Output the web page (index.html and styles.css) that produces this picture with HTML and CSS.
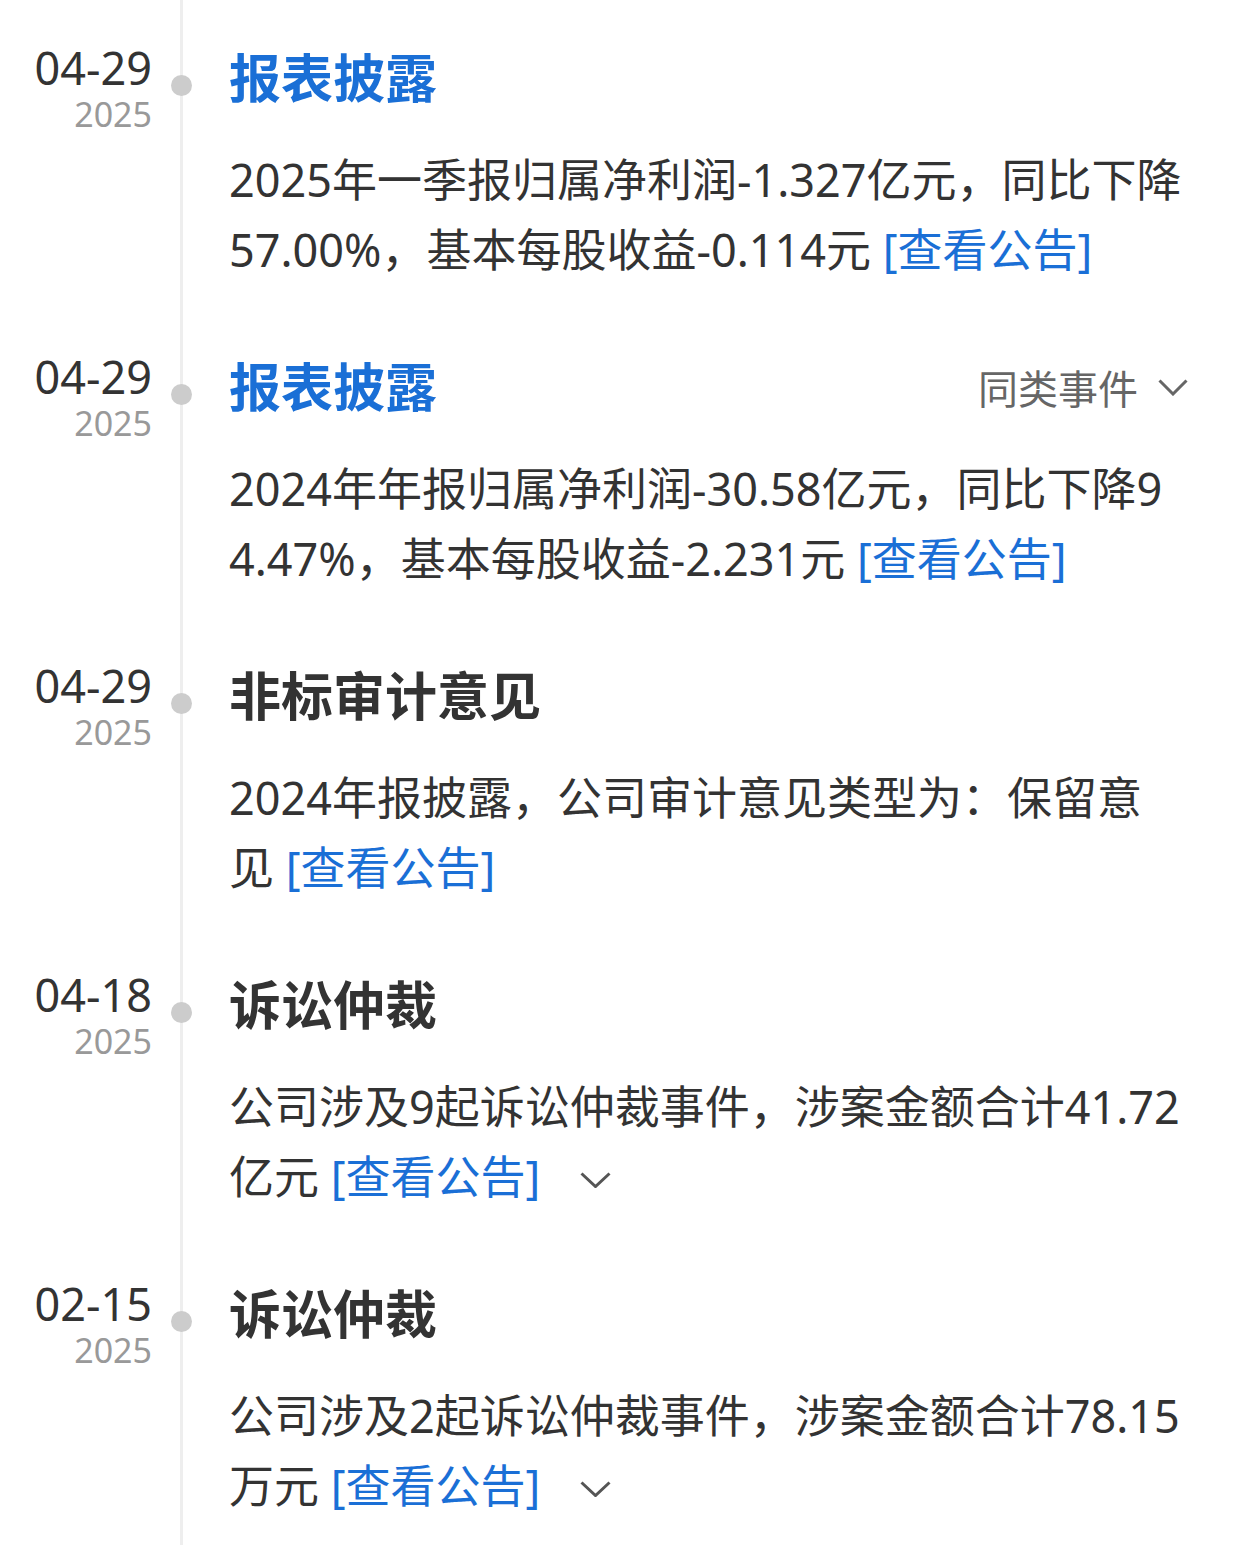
FILE: index.html
```html
<!DOCTYPE html>
<html lang="zh-CN">
<head>
    <meta charset="UTF-8">
    <meta name="viewport" content="width=device-width, initial-scale=1.0">
    <title>公司大事</title>
    <link rel="stylesheet" href="styles.css">
</head>
<body>
    <div class="timeline">

        <!-- 2025 Q1 report -->
        <div class="event">
            <div class="when">
                <div class="when-inner">
                    <span class="day">04-29</span>
                    <span class="year">2025</span>
                </div>
            </div>
            <div class="axis"><span class="dot"></span></div>
            <div class="content">
                <div class="title-row">
                    <span class="title blue">报表披露</span>
                </div>
                <p class="desc">2025年一季报归属净利润-1.327亿元，同比下降<br>57.00%，基本每股收益-0.114元 <a class="link" href="#">[查看公告]</a></p>
            </div>
        </div>

        <!-- 2024 annual report -->
        <div class="event">
            <div class="when">
                <div class="when-inner">
                    <span class="day">04-29</span>
                    <span class="year">2025</span>
                </div>
            </div>
            <div class="axis"><span class="dot"></span></div>
            <div class="content">
                <div class="title-row">
                    <span class="title blue">报表披露</span>
                    <span class="similar">同类事件
                        <svg class="chevron" width="30" height="17" viewBox="0 0 30 17"><polyline points="1.5,1.5 15,15 28.5,1.5" /></svg>
                    </span>
                </div>
                <p class="desc">2024年年报归属净利润-30.58亿元，同比下降9<br>4.47%，基本每股收益-2.231元 <a class="link" href="#">[查看公告]</a></p>
            </div>
        </div>

        <!-- audit opinion -->
        <div class="event">
            <div class="when">
                <div class="when-inner">
                    <span class="day">04-29</span>
                    <span class="year">2025</span>
                </div>
            </div>
            <div class="axis"><span class="dot"></span></div>
            <div class="content">
                <div class="title-row">
                    <span class="title">非标审计意见</span>
                </div>
                <p class="desc">2024年报披露，公司审计意见类型为：保留意<br>见 <a class="link" href="#">[查看公告]</a></p>
            </div>
        </div>

        <!-- lawsuits -->
        <div class="event">
            <div class="when">
                <div class="when-inner">
                    <span class="day">04-18</span>
                    <span class="year">2025</span>
                </div>
            </div>
            <div class="axis"><span class="dot"></span></div>
            <div class="content">
                <div class="title-row">
                    <span class="title">诉讼仲裁</span>
                </div>
                <p class="desc">公司涉及9起诉讼仲裁事件，涉案金额合计41.72<br>亿元 <a class="link" href="#">[查看公告]</a><svg class="chevron more" width="31" height="16" viewBox="0 0 31 16"><polyline points="1.5,1.5 15.5,14.5 29.5,1.5" /></svg></p>
            </div>
        </div>

        <div class="event">
            <div class="when">
                <div class="when-inner">
                    <span class="day">02-15</span>
                    <span class="year">2025</span>
                </div>
            </div>
            <div class="axis"><span class="dot"></span></div>
            <div class="content">
                <div class="title-row">
                    <span class="title">诉讼仲裁</span>
                </div>
                <p class="desc">公司涉及2起诉讼仲裁事件，涉案金额合计78.15<br>万元 <a class="link" href="#">[查看公告]</a><svg class="chevron more" width="31" height="16" viewBox="0 0 31 16"><polyline points="1.5,1.5 15.5,14.5 29.5,1.5" /></svg></p>
            </div>
        </div>

    </div>
</body>
</html>
```

FILE: styles.css
```css
body {
    margin: 0;
    font-family: "Noto Sans", "Noto Sans CJK SC", sans-serif;
    background-color: #fff;
    color: #333;
}
.timeline {
    width: 1260px;
}
.event {
    display: grid;
    grid-template-columns: 152px 58px 1fr;
    height: 309px;
}
.when {
    padding-top: 43px;
    display: flex;
    justify-content: flex-end;
}
.when-inner {
    display: flex;
    flex-direction: column;
    align-items: flex-end;
    white-space: nowrap;
}
.day {
    font-size: 45px;
    line-height: 50px;
    color: #333;
}
.year {
    font-size: 34px;
    line-height: 40px;
    margin-top: 1px;
    color: #999;
}
.axis {
    background: linear-gradient(#eee, #eee) no-repeat center / 3px 100%;
}
.dot {
    display: block;
    width: 21px;
    height: 21px;
    margin: 75px auto 0;
    border-radius: 50%;
    background-color: #ccc;
}
.content {
    padding: 48px 40px 0 19px;
}
.title-row {
    display: flex;
    justify-content: space-between;
    align-items: center;
    height: 60px;
    padding-right: 32px;
}
.title {
    font-size: 52px;
    font-weight: bold;
    line-height: 60px;
    color: #333;
}
.title.blue {
    color: #1a6fd6;
}
.similar {
    display: flex;
    align-items: center;
    font-size: 40px;
    color: #666;
}
.chevron {
    fill: none;
    stroke: #666;
    stroke-width: 3;
}
.similar .chevron {
    margin-left: 20px;
}
.desc {
    margin: 37px 0 0;
    font-size: 45px;
    line-height: 70px;
    color: #333;
}
.link {
    color: #1a6fd6;
    text-decoration: none;
}
.chevron.more {
    margin-left: 40px;
    vertical-align: 6px;
    stroke: #555;
}
```
